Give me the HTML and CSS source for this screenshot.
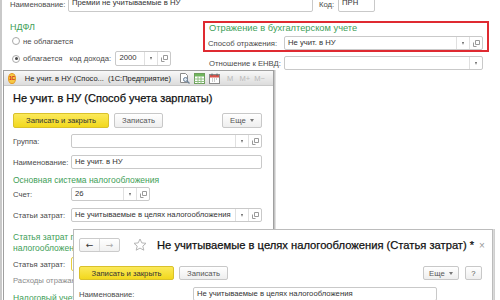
FILE: index.html
```html
<!DOCTYPE html>
<html lang="ru">
<head>
  <meta charset="UTF-8">
  <title>Способ учета зарплаты</title>
  <link rel="stylesheet" href="styles.css">
</head>
<body>

  <!-- Main form: premium type -->
  <div class="main">
    <div class="row top-row">
      <span class="lbl lbl-name">Наименование:</span>
      <div class="field w-name"><span class="val">Премии не учитываемые в НУ</span></div>
      <span class="lbl lbl-code">Код:</span>
      <div class="field w-code"><span class="val">ПРН</span></div>
    </div>

    <div class="cols">
      <div class="col-left">
        <div class="group-title">НДФЛ</div>
        <div class="radio-row first"><span class="radio"></span><span>не облагается</span></div>
        <div class="radio-row second">
          <span class="radio checked"></span><span>облагается</span>
          <span class="lbl lbl-income">код дохода:</span>
          <div class="field w-income">
            <span class="val">2000</span>
            <span class="dd"></span>
            <span class="open"><svg width="7" height="7" viewBox="0 0 7 7"><path d="M2.5 .5h4v4h-4z M.5 2.5v4h3" fill="none" stroke="#9a9a9a"/></svg></span>
          </div>
        </div>
      </div>

      <div class="col-right">
        <div class="accent-box">
          <div class="group-title">Отражение в бухгалтерском учете</div>
          <div class="row">
            <span class="lbl lbl-acc">Способ отражения:</span>
            <div class="field w-acc">
              <span class="val">Не учит. в НУ</span>
              <span class="dd"></span>
              <span class="open"><svg width="7" height="7" viewBox="0 0 7 7"><path d="M2.5 .5h4v4h-4z M.5 2.5v4h3" fill="none" stroke="#9a9a9a"/></svg></span>
            </div>
          </div>
        </div>
        <div class="row envd-row">
          <span class="lbl lbl-envd">Отношение к ЕНВД:</span>
          <div class="field w-acc">
            <span class="val"></span>
            <span class="dd"></span>
          </div>
        </div>
      </div>
    </div>
  </div>

  <!-- Window: salary accounting method -->
  <div class="win win-method">
    <div class="titlebar">
      <span class="logo">1С</span>
      <span class="tb-caption">Не учит. в НУ (Спосо...&nbsp;&nbsp;(1С:Предприятие)</span>
      <span class="tb-icons">
        <svg width="11" height="11" viewBox="0 0 11 11"><path d="M1.5 .5h5l2 2v7h-7z" fill="#fff" stroke="#8a8a8a"/><circle cx="6.5" cy="6.5" r="2" fill="#dfe9f3" stroke="#6b7f95"/><path d="M8 8l2.5 2.5" stroke="#6b7f95" stroke-width="1.2"/></svg>
        <svg width="11" height="11" viewBox="0 0 11 11"><rect x=".5" y=".5" width="10" height="10" fill="#fff" stroke="#6d9e5b"/><rect x="1" y="1" width="9" height="2.5" fill="#6fb65c"/><path d="M.5 6h10M.5 8.5h10M4 3.5v7M7 3.5v7" stroke="#8fbf80"/></svg>
        <svg width="11" height="11" viewBox="0 0 11 11"><rect x=".5" y="1.5" width="10" height="9" fill="#fff" stroke="#8a8a8a"/><rect x="1" y="2" width="9" height="2.5" fill="#d9534a"/><path d="M3 .5v2.5M8 .5v2.5" stroke="#666"/><path d="M3 6h1M5 6h1M7 6h1M3 8h1M5 8h1" stroke="#999"/></svg>
      </span>
      <span class="tb-mem">M&nbsp;&nbsp;&nbsp;M+&nbsp;&nbsp;M−</span>
      <span class="tb-sep"></span>
      <svg class="tb-btn" width="8" height="8" viewBox="0 0 8 8"><rect x=".5" y=".5" width="7" height="7" fill="none" stroke="#555"/><path d="M.5 1.5h7" stroke="#555"/></svg>
      <svg class="tb-btn" width="8" height="8" viewBox="0 0 8 8"><path d="M1 1l6 6M7 1l-6 6" stroke="#333" stroke-width="1.4"/></svg>
    </div>

    <div class="form-body">
      <h1 class="form-title">Не учит. в НУ (Способ учета зарплаты)</h1>

      <div class="toolbar">
        <button class="btn btn-main">Записать и закрыть</button>
        <button class="btn">Записать</button>
        <button class="btn btn-more">Еще <span class="caret"></span></button>
      </div>

      <div class="frow gap-group">
        <span class="lbl flbl">Группа:</span>
        <div class="field w-full">
          <span class="val"></span>
          <span class="dd"></span>
          <span class="open"><svg width="7" height="7" viewBox="0 0 7 7"><path d="M2.5 .5h4v4h-4z M.5 2.5v4h3" fill="none" stroke="#9a9a9a"/></svg></span>
        </div>
      </div>
      <div class="frow gap-name">
        <span class="lbl flbl">Наименование:</span>
        <div class="field w-full"><span class="val">Не учит. в НУ</span></div>
      </div>

      <div class="group-title sub gap-osn">Основная система налогообложения</div>
      <div class="frow gap-acc">
        <span class="lbl flbl">Счет:</span>
        <div class="field w-acct">
          <span class="val">26</span>
          <span class="dd"></span>
          <span class="open"><svg width="7" height="7" viewBox="0 0 7 7"><path d="M2.5 .5h4v4h-4z M.5 2.5v4h3" fill="none" stroke="#9a9a9a"/></svg></span>
        </div>
      </div>
      <div class="frow gap-cost">
        <span class="lbl flbl">Статьи затрат:</span>
        <div class="field w-full">
          <span class="val">Не учитываемые в целях налогообложения</span>
          <span class="dd"></span>
          <span class="open"><svg width="7" height="7" viewBox="0 0 7 7"><path d="M2.5 .5h4v4h-4z M.5 2.5v4h3" fill="none" stroke="#9a9a9a"/></svg></span>
        </div>
      </div>

      <div class="group-title sub gap-tax">Статья затрат по<br>налогообложению</div>
      <div class="frow gap-taxcost">
        <span class="lbl flbl">Статья затрат:</span>
        <div class="field w-full current"><span class="val"></span></div>
      </div>
      <div class="note">Расходы отражаются в налоговом учете</div>
      <div class="group-title sub gap-nu">Налоговый учет</div>
    </div>
  </div>

  <!-- Window: cost item -->
  <div class="win win-item">
    <div class="item-head">
      <div class="nav">
        <span class="nav-btn">←</span>
        <span class="nav-btn off">→</span>
      </div>
      <svg class="star" width="14" height="14" viewBox="0 0 14 14"><path d="M7 1l1.8 3.9 4.2.4-3.2 2.8 1 4.1L7 10.1 3.2 12.2l1-4.1L1 5.3l4.2-.4z" fill="none" stroke="#b5b5b5"/></svg>
      <span class="item-title">Не учитываемые в целях налогообложения (Статья затрат) *</span>
      <span class="close">×</span>
    </div>

    <div class="toolbar item-toolbar">
      <button class="btn btn-main btn-main-wide">Записать и закрыть</button>
      <button class="btn">Записать</button>
      <button class="btn btn-more btn-more-item">Еще <span class="caret"></span></button>
      <button class="btn btn-help">?</button>
    </div>

    <div class="frow item-row">
      <span class="lbl item-lbl">Наименование:</span>
      <div class="field w-item"><span class="val">Не учитываемые в целях налогообложения</span></div>
    </div>
  </div>

</body>
</html>
```

FILE: styles.css
```css
/* General */
body {
  margin: 0;
  width: 500px;
  height: 300px;
  overflow: hidden;
  position: relative;
  background: #fff;
  font-family: "Liberation Sans", Arial, sans-serif;
  font-size: 7.7px;
  color: #4a4a4a;
  box-shadow: inset 2px 0 0 #c9c9c9;
}

.lbl {
  white-space: nowrap;
}

.group-title {
  color: #3e9e57;
  font-size: 9.3px;
  line-height: 12px;
  white-space: nowrap;
}

/* Input field with optional dropdown / open buttons */
.field {
  display: flex;
  height: 14px;
  box-sizing: border-box;
  border: 1px solid #c9c9c9;
  border-radius: 2px;
  background: #fff;
  align-items: stretch;
}

.field .val {
  flex: 1;
  padding-left: 3px;
  line-height: 12px;
  color: #333;
  white-space: nowrap;
  overflow: hidden;
}

.field .dd,
.field .open {
  width: 12px;
  border-left: 1px solid #e0e0e0;
  display: flex;
  align-items: center;
  justify-content: center;
}

.field .dd::after {
  content: "";
  border-top: 3px solid #666;
  border-left: 1.5px solid transparent;
  border-right: 1.5px solid transparent;
}

.field.current {
  border-color: #e8cf3e;
}

/* Main form */
.main {
  padding: 0 10px;
  margin-top: -4px;
}

.row {
  display: flex;
  align-items: center;
}

.top-row {
  height: 16px;
}

.top-row .field {
  height: 16px;
}

.lbl-name { width: 58px; }
.w-name { width: 245px; }
.lbl-code { width: 19px; margin-left: 6px; }
.w-code { width: 37px; }

.cols {
  display: flex;
  margin-top: 9px;
}

.col-left {
  width: 193px;
}

.col-left .group-title {
  font-size: 9px;
}

.radio-row {
  display: flex;
  align-items: center;
  padding-left: 2px;
}

.radio-row.first {
  height: 14px;
  margin-top: 1px;
}

.radio-row.second {
  height: 15px;
  margin-top: 3px;
}

.radio {
  width: 8px;
  height: 8px;
  box-sizing: border-box;
  border: 1px solid #a9a9a9;
  border-radius: 50%;
  margin-right: 3px;
  display: flex;
  align-items: center;
  justify-content: center;
}

.radio.checked::after {
  content: "";
  width: 3px;
  height: 3px;
  border-radius: 50%;
  background: #4a4a4a;
}

.lbl-income {
  margin-left: 7px;
  width: 46px;
}

.w-income {
  width: 56px;
  height: 15px;
}

.accent-box {
  width: 286px;
  height: 31px;
  box-sizing: border-box;
  border: 2px solid #df2a31;
  padding: 0 4px 0 3px;
}

.accent-box .group-title {
  padding-left: 1px;
  line-height: 11px;
  margin-bottom: 2px;
}

.lbl-acc { width: 76px; }
.w-acc { width: 199px; }

.envd-row {
  margin-top: 4px;
  padding-left: 6px;
}

.lbl-envd { width: 75px; }

/* Windows */
.win {
  position: absolute;
  background: #fff;
  box-sizing: border-box;
}

.win-method {
  left: 3px;
  top: 70px;
  width: 271px;
  height: 240px;
  border: 1px solid #a0a0a0;
  box-shadow: 1px 0 0 #c4c4c4, 2px 0 0 #e0e0e0;
}

.titlebar {
  height: 15px;
  box-sizing: border-box;
  background: linear-gradient(#f8f8f8, #dcdcdc);
  border-bottom: 1px solid #c8c8c8;
  display: flex;
  align-items: center;
  padding: 0 6px 0 4px;
  color: #222;
}

.logo {
  width: 9px;
  height: 9px;
  border-radius: 50%;
  background: #f7c843;
  border: 1px solid #e39a22;
  color: #d1261b;
  font-size: 5px;
  font-weight: bold;
  line-height: 9px;
  text-align: center;
  letter-spacing: -0.3px;
}

.tb-caption {
  margin-left: 9px;
  font-size: 7.5px;
  white-space: nowrap;
}

.tb-icons {
  display: flex;
  gap: 4px;
  margin-left: 8px;
}

.tb-mem {
  margin-left: 7px;
  color: #b9b9b9;
  font-size: 7.5px;
  white-space: nowrap;
}

.tb-sep {
  width: 1px;
  height: 10px;
  background: #c4c4c4;
  margin: 0 6px 0 5px;
}

.tb-btn {
  margin-left: 6px;
}

.form-body {
  padding: 5px 11px 0 9px;
}

.form-title {
  margin: 0;
  font-size: 11px;
  font-weight: normal;
  line-height: 14px;
  color: #111;
  white-space: nowrap;
  -webkit-text-stroke: 0.25px #111;
}

.toolbar {
  display: flex;
  height: 15px;
  margin-top: 8px;
}

.btn {
  font-family: inherit;
  font-size: 7.7px;
  color: #555;
  background: linear-gradient(#ffffff, #eeeeee);
  border: 1px solid #c8c8c8;
  border-radius: 2px;
  padding: 0;
  height: 100%;
  margin-right: 5px;
  flex: none;
}

.btn-main {
  width: 96px;
  background: linear-gradient(#fbe95a, #f2d81d);
  border-color: #d9c12b;
  color: #333;
}

.btn:nth-child(2) { width: 49px; }

.btn-more {
  margin-left: auto;
  margin-right: 0;
  width: 40px;
}

.caret {
  display: inline-block;
  vertical-align: middle;
  margin-left: 2px;
  border-top: 3px solid #777;
  border-left: 2px solid transparent;
  border-right: 2px solid transparent;
}

.frow {
  display: flex;
  align-items: center;
}

.flbl { width: 58px; }
.w-full { width: 191px; }
.w-acct { width: 79px; }

.gap-group { margin-top: 6px; }
.gap-name { margin-top: 7px; }
.gap-osn { margin-top: 6px; line-height: 11px; font-size: 8.5px; }
.gap-acc { margin-top: 1px; }
.gap-cost { margin-top: 7px; }
.gap-tax { margin-top: 10px; line-height: 11px; font-size: 8.5px; }
.gap-taxcost { margin-top: 3px; }
.gap-nu { margin-top: 7px; line-height: 11px; font-size: 8.5px; }

.note {
  margin-top: 4px;
  line-height: 11px;
  color: #8a8a8a;
  white-space: nowrap;
}

/* Cost item window */
.win-item {
  left: 73px;
  top: 229px;
  width: 420px;
  height: 90px;
  border: 1px solid #bcbcbc;
  box-shadow: 1px 0 0 #dadada, 2px 0 0 #cfcfcf;
  padding: 8px 5px 0 5px;
}

.item-head {
  display: flex;
  align-items: center;
  height: 14px;
}

.nav {
  display: flex;
  width: 41px;
  height: 14px;
  box-sizing: border-box;
  border: 1px solid #cbcbcb;
  border-radius: 2px;
  background: linear-gradient(#fff, #f1f1f1);
}

.nav-btn {
  flex: 1;
  text-align: center;
  font-family: "DejaVu Sans", sans-serif;
  font-size: 9px;
  line-height: 12px;
  color: #333;
}

.nav-btn + .nav-btn {
  border-left: 1px solid #dadada;
}

.nav-btn.off {
  color: #aaa;
}

.star {
  margin-left: 13px;
  flex: none;
}

.item-title {
  margin-left: 10px;
  font-size: 11.2px;
  color: #111;
  white-space: nowrap;
  -webkit-text-stroke: 0.25px #111;
}

.close {
  margin-left: auto;
  color: #999;
  font-size: 10px;
  width: 8px;
}

.item-toolbar {
  height: 14px;
  margin-top: 14px;
}

.btn-main-wide { width: 95px; }

.btn-more-item {
  width: 36px;
}

.btn-help {
  width: 17px;
  margin: 0 5px 0 6px;
}

.item-row {
  margin-top: 7px;
}

.item-lbl { width: 114px; }
.w-item { width: 244px; }
```
